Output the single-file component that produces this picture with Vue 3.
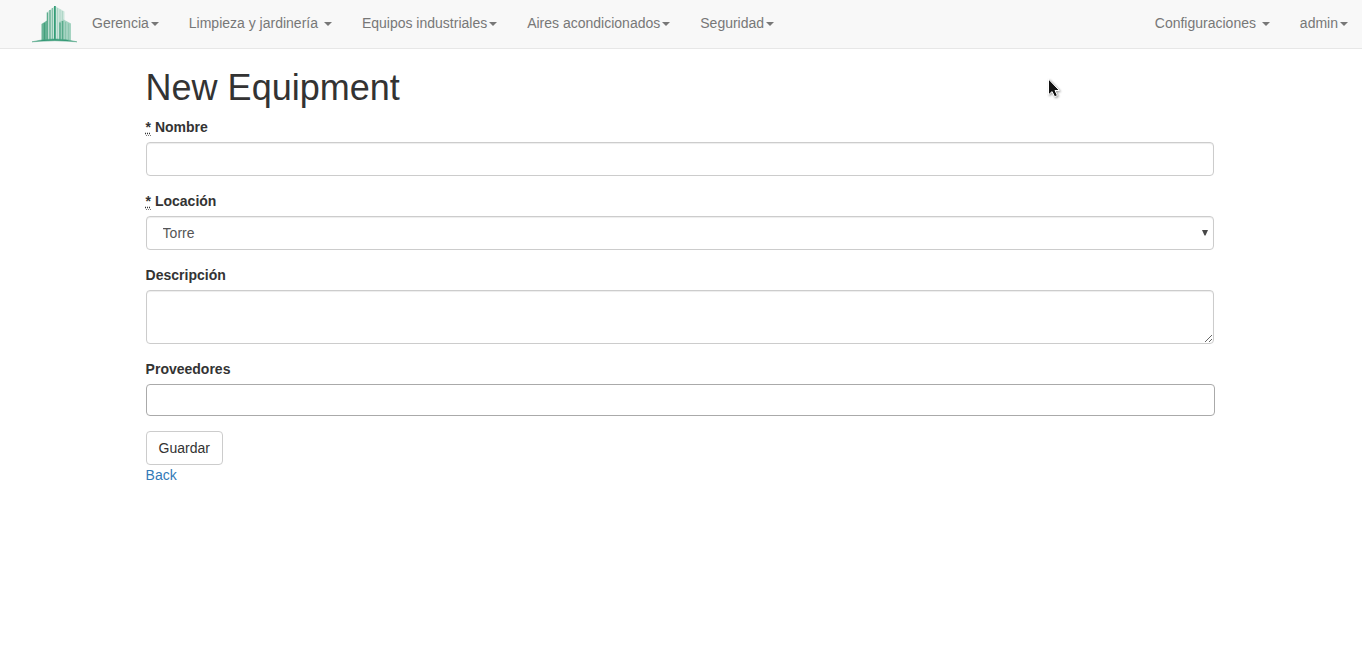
<script setup>
import { ref } from 'vue'

const mainMenu = [
  { label: 'Gerencia', spaced: false },
  { label: 'Limpieza y jardinería', spaced: true },
  { label: 'Equipos industriales', spaced: false },
  { label: 'Aires acondicionados', spaced: false },
  { label: 'Seguridad', spaced: false },
]
const userMenu = [
  { label: 'Configuraciones', spaced: true },
  { label: 'admin', spaced: false },
]
const name = ref('')
const location = ref('Torre')
const description = ref('')
</script>

<template>
  <div class="page">
    <nav class="navbar">
      <a class="brand">
        <svg width="46" height="38" viewBox="0 0 46 38" fill="none">
          <path d="M14.5 35V7.5L23 1l9.5 5.5V35z" fill="#cde6dc" />
          <path d="M9.5 35.5V19l5.5-3.5v19.5z" fill="#69b396" />
          <path d="M27 35V17l4.5-2.5 7.5 4v17z" fill="#a5d3c1" />
          <path d="M12.5 18v17" stroke="#43a07c" stroke-width="1.2" />
          <path d="M15.5 7.5V35M18 5v30" stroke="#5cad8e" stroke-width="1.3" />
          <path d="M20.4 3v32" stroke="#83c2aa" stroke-width="1.3" />
          <path d="M22.9 1v34" stroke="#199066" stroke-width="1.5" />
          <path d="M25.5 3v32M28 4.5V17M30.4 6v9" stroke="#a8d4c3" stroke-width=".9" />
          <path d="M28 17.5V35M30.6 16v19" stroke="#57aa8a" stroke-width="1.5" />
          <path d="M33.5 17v18M36.7 18.5V35" stroke="#89c4ad" stroke-width="1" />
          <path d="M0 36.8Q23 31 45 36.8Q23 34.6 0 36.8z" fill="#309874" stroke="#4ea484" stroke-width=".5" />
        </svg>
      </a>
      <ul class="menu">
        <li v-for="item in mainMenu" :key="item.label">
          <a>{{ item.label }}<template v-if="item.spaced">&nbsp;</template><b class="caret"></b></a>
        </li>
      </ul>
      <ul class="menu right">
        <li v-for="item in userMenu" :key="item.label">
          <a>{{ item.label }}<template v-if="item.spaced">&nbsp;</template><b class="caret"></b></a>
        </li>
      </ul>
    </nav>

    <main class="content">
      <h1>New Equipment</h1>
      <form @submit.prevent>
        <div class="group">
          <label for="name"><abbr>*</abbr> Nombre</label>
          <input id="name" v-model="name" class="control" type="text" />
        </div>
        <div class="group">
          <label for="location"><abbr>*</abbr> Locación</label>
          <div class="select-wrap">
            <select id="location" v-model="location" class="control">
              <option>Torre</option>
            </select>
            <svg class="arrow" width="6" height="6" viewBox="0 0 6 6"><path d="M0 0h6L3.5 5.5h-1z" fill="#484848" /></svg>
          </div>
        </div>
        <div class="group">
          <label for="description">Descripción</label>
          <textarea id="description" v-model="description" class="control" rows="2"></textarea>
        </div>
        <div class="group">
          <label>Proveedores</label>
          <div class="multi"></div>
        </div>
        <button class="btn" type="submit">Guardar</button>
      </form>
      <a class="back">Back</a>
    </main>

    <svg class="pointer" width="15" height="23" viewBox="0 0 15 23">
      <path d="M1.5 1v15.8l3.6-3.2 2.5 5.2 2.8-1.3-2.4-5h4.4z" fill="#111" stroke="#fff" stroke-width="1" />
    </svg>
  </div>
</template>

<style>
html,
body {
  margin: 0;
  background: #fff;
}
</style>

<style scoped>
* {
  box-sizing: border-box;
}
.page {
  position: relative;
  min-height: 669px;
  font: 14px/20px "Liberation Sans", Arial, sans-serif;
  color: #333;
}
.navbar {
  display: flex;
  height: 49px;
  padding-left: 32px;
  background: #f8f8f8;
  border-bottom: 1px solid #e7e7e7;
}
.brand {
  width: 45px;
  height: 43px;
  padding-top: 5px;
}
.brand svg {
  display: block;
}
.menu {
  display: flex;
  margin: 0;
  padding: 0;
  list-style: none;
}
.menu a {
  display: block;
  padding: 13px 15px 15px;
  color: #777;
  white-space: nowrap;
}
.right {
  margin-left: auto;
  margin-right: -1px;
}
.caret {
  display: inline-block;
  margin-left: 2px;
  vertical-align: middle;
  border-top: 4px solid #777;
  border-left: 4px solid transparent;
  border-right: 4px solid transparent;
}
.content {
  width: 1068px;
  margin-left: 145.6px;
  padding-top: 19px;
}
h1 {
  margin: 0 0 9px;
  font-size: 36px;
  font-weight: 400;
  line-height: 40px;
}
.group {
  margin-bottom: 15px;
}
label {
  display: block;
  margin-bottom: 5px;
  font-weight: 700;
}
abbr {
  border-bottom: 1px dotted #777;
  text-decoration: underline dotted;
}
.control {
  display: block;
  width: 100%;
  height: 34px;
  margin: 0;
  padding: 6px 12px;
  font: inherit;
  color: #555;
  background: #fff;
  border: 1px solid #ccc;
  border-radius: 4px;
  box-shadow: inset 0 1px 1px rgba(0, 0, 0, 0.075);
  outline: 0;
}
textarea.control {
  height: 54px;
  resize: vertical;
}
.select-wrap {
  position: relative;
}
select.control {
  appearance: none;
  padding-left: 16px;
}
.arrow {
  position: absolute;
  right: 6px;
  top: 14px;
}
.multi {
  width: 1069px;
  height: 32px;
  border: 1px solid #aaa;
  border-radius: 4px;
}
.btn {
  display: block;
  height: 34px;
  margin: 0;
  padding: 6px 12px;
  font: inherit;
  color: #333;
  background: #fff;
  border: 1px solid #ccc;
  border-radius: 4px;
}
.back {
  display: block;
  color: #337ab7;
}
.pointer {
  position: absolute;
  left: 1047px;
  top: 78px;
  filter: drop-shadow(1px 1px 1px rgba(0, 0, 0, 0.4));
}
</style>
